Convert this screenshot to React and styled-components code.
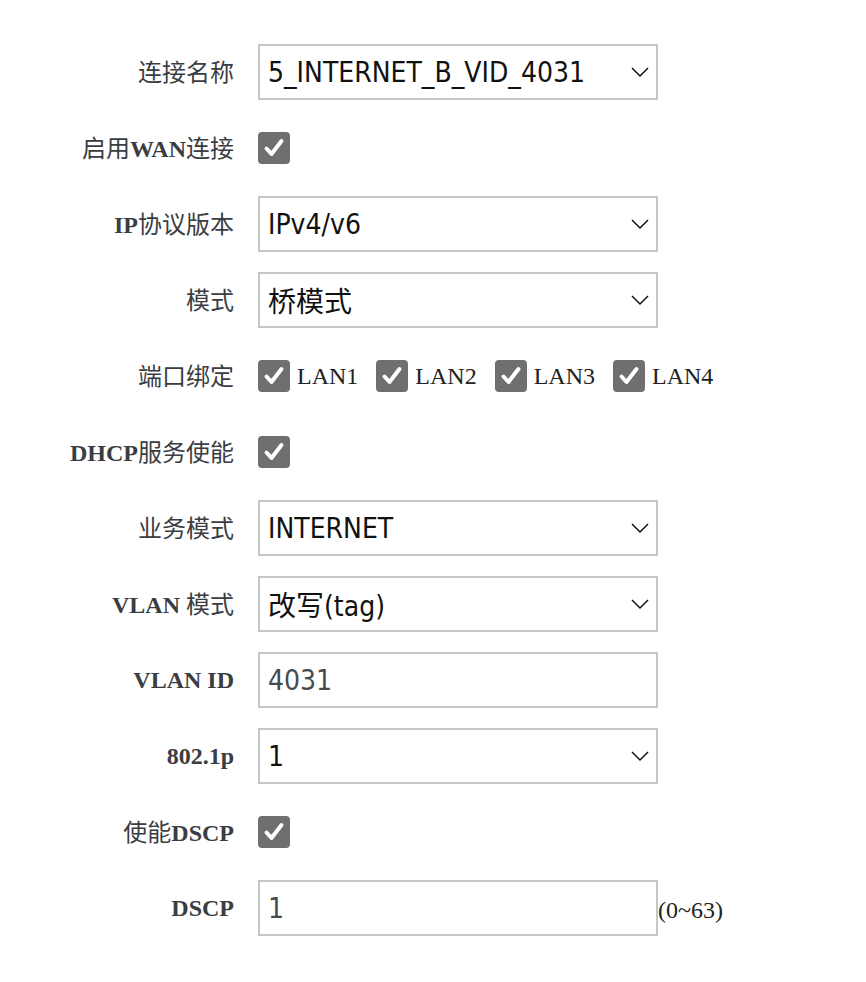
import React from "react";
import styled, { createGlobalStyle } from "styled-components";

const Global = createGlobalStyle`
  html, body { margin: 0; padding: 0; background: #fff; }
  body { font-family: "Liberation Serif", "Noto Sans CJK SC", serif; }
`;

const Form = styled.div`
  display: flex;
  flex-direction: column;
  gap: 20px;
  padding-top: 44px;
`;

const Row = styled.div`
  display: grid;
  grid-template-columns: 234px auto;
  column-gap: 24px;
  align-items: center;
  height: 56px;
`;

const Label = styled.div`
  text-align: right;
  font-family: "Liberation Serif", "Noto Sans CJK SC", serif;
  font-weight: bold;
  font-size: 24px;
  line-height: 1;
  color: #3a3d42;
  white-space: nowrap;
  .cjk { font-family: "Noto Sans CJK SC", sans-serif; font-weight: 400; }
`;

const Control = styled.div`
  display: flex;
  align-items: center;
`;

const Box = styled.div`
  box-sizing: border-box;
  width: 400px;
  height: 56px;
  border: 2px solid #c3c7c7;
  display: flex;
  align-items: center;
  justify-content: space-between;
  padding: 0 6px 0 8px;
  font-family: "DejaVu Sans Condensed", "DejaVu Sans", "Noto Sans CJK SC", sans-serif;
  font-stretch: condensed;
  font-size: 28px;
  color: ${(p) => (p.$muted ? "#464b52" : "#111")};
`;

const Check = styled.span`
  box-sizing: border-box;
  width: 32px;
  height: 32px;
  border-radius: 4px;
  background: #6f6f6f;
  display: inline-flex;
  align-items: center;
  justify-content: center;
  flex-shrink: 0;
`;

const Lan = styled.label`
  display: inline-flex;
  align-items: center;
  gap: 7px;
  margin-right: 18px;
  font-family: "Liberation Serif", serif;
  font-size: 24px;
  color: #222;
`;

const Hint = styled.span`
  font-family: "Liberation Serif", serif;
  font-size: 24px;
  color: #222;
  align-self: flex-end;
  margin-bottom: 12px;
`;

const Tick = () => (
  <Check>
    <svg width="22" height="22" viewBox="0 0 22 22">
      <path d="M3.5 11.5 L8.5 17 L18.5 4" fill="none" stroke="#fff" strokeWidth="4" strokeLinecap="round" strokeLinejoin="round" />
    </svg>
  </Check>
);

const Chevron = () => (
  <svg width="20" height="12" viewBox="0 0 20 12">
    <path d="M2 2 L10 10 L18 2" fill="none" stroke="#111" strokeWidth="1.5" />
  </svg>
);

const Select = ({ value }) => (
  <Box>
    <span>{value}</span>
    <Chevron />
  </Box>
);

const C = ({ children }) => <span className="cjk">{children}</span>;

export default function App() {
  return (
    <>
      <Global />
      <Form>
        <Row>
          <Label><C>连接名称</C></Label>
          <Control><Select value="5_INTERNET_B_VID_4031" /></Control>
        </Row>
        <Row>
          <Label><C>启用</C>WAN<C>连接</C></Label>
          <Control><Tick /></Control>
        </Row>
        <Row>
          <Label>IP<C>协议版本</C></Label>
          <Control><Select value="IPv4/v6" /></Control>
        </Row>
        <Row>
          <Label><C>模式</C></Label>
          <Control><Select value="桥模式" /></Control>
        </Row>
        <Row>
          <Label><C>端口绑定</C></Label>
          <Control>
            {["LAN1", "LAN2", "LAN3", "LAN4"].map((l) => (
              <Lan key={l}><Tick />{l}</Lan>
            ))}
          </Control>
        </Row>
        <Row>
          <Label>DHCP<C>服务使能</C></Label>
          <Control><Tick /></Control>
        </Row>
        <Row>
          <Label><C>业务模式</C></Label>
          <Control><Select value="INTERNET" /></Control>
        </Row>
        <Row>
          <Label>VLAN <C>模式</C></Label>
          <Control><Select value="改写(tag)" /></Control>
        </Row>
        <Row>
          <Label>VLAN ID</Label>
          <Control><Box $muted>4031</Box></Control>
        </Row>
        <Row>
          <Label>802.1p</Label>
          <Control><Select value="1" /></Control>
        </Row>
        <Row>
          <Label><C>使能</C>DSCP</Label>
          <Control><Tick /></Control>
        </Row>
        <Row>
          <Label>DSCP</Label>
          <Control><Box $muted>1</Box><Hint>(0~63)</Hint></Control>
        </Row>
      </Form>
    </>
  );
}
